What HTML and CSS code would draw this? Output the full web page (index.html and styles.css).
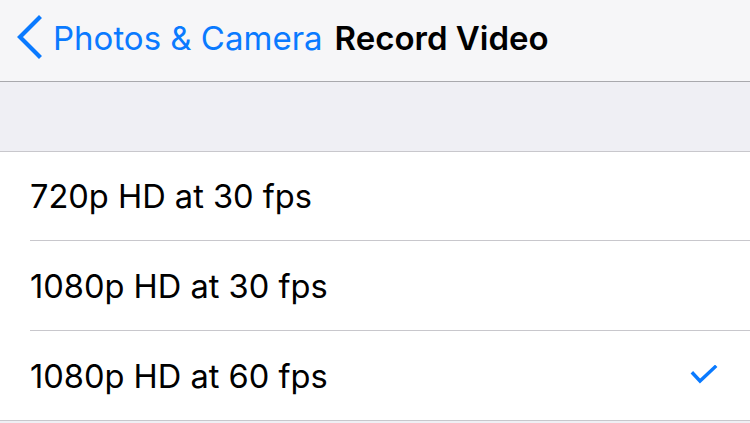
FILE: index.html
```html
<!DOCTYPE html>
<html lang="en">
<head>
<meta charset="utf-8">
<title>Record Video</title>
<link rel="stylesheet" href="styles.css">
</head>
<body>
<header class="nav">
  <a class="back">
    <svg class="chev" width="28" height="44" viewBox="0 0 28 44"><path d="M24 3 L5 22 L24 41" fill="none" stroke="#0a7aff" stroke-width="4.2" stroke-linecap="square" stroke-linejoin="miter"/></svg>
    <span class="back-label">Photos &amp; Camera</span>
  </a>
  <h1 class="title">Record Video</h1>
</header>
<div class="section-gap"></div>
<ul class="list">
  <li class="row"><span class="label">720p HD at 30 fps</span></li>
  <li class="row"><span class="label">1080p HD at 30 fps</span></li>
  <li class="row"><span class="label">1080p HD at 60 fps</span>
    <svg class="check" width="28" height="22" viewBox="0 0 28 22"><path d="M3 8.5 L10 16 L25 2" fill="none" stroke="#0a7aff" stroke-width="3.4" stroke-linecap="square"/></svg>
  </li>
</ul>
</body>
</html>
```
FILE: styles.css
```css
html, body {
  margin: 0;
  padding: 0;
}
body {
  background: #efeff4;
  font-family: Inter, "Liberation Sans", sans-serif;
  width: 750px;
  height: 423px;
  overflow: hidden;
}
.nav {
  height: 82px;
  box-sizing: border-box;
  background: #f6f6f8;
  border-bottom: 1px solid #a9a9ad;
  display: flex;
  align-items: center;
  padding-left: 15px;
}
.back {
  display: flex;
  align-items: center;
  color: #0a7aff;
}
.chev {
  display: block;
  margin-right: 10px;
  margin-top: -7px;
}
.back-label {
  font-size: 33px;
  margin-top: -6px;
}
.title {
  margin: -6px 0 0 12px;
  font-size: 33px;
  font-weight: 600;
  color: #000;
}
.section-gap {
  height: 70px;
  box-sizing: border-box;
  border-bottom: 1px solid #c8c7cc;
}
.list {
  list-style: none;
  margin: 0;
  padding: 0 0 0 30px;
  background: #fff;
  border-bottom: 1px solid #c8c7cc;
}
.row {
  height: 90px;
  box-sizing: border-box;
  display: flex;
  align-items: center;
  justify-content: space-between;
  padding-right: 32px;
  border-bottom: 1px solid #c8c7cc;
  font-size: 32.6px;
  color: #000;
}
.row:first-child {
  height: 89px;
}
.row:last-child {
  border-bottom: none;
  height: 89px;
}
```
